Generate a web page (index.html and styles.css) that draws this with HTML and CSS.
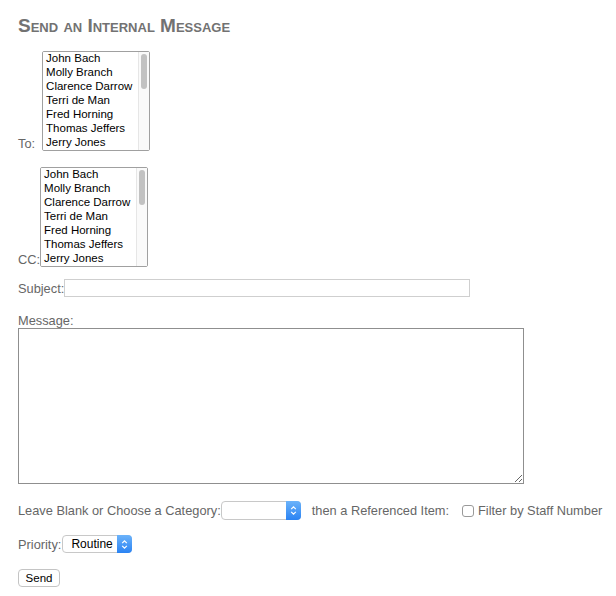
FILE: index.html
```html
<!DOCTYPE html>
<html>

<head>
    <title>Send an Internal Message</title>

    <link rel="stylesheet" href="styles.css">

</head>

<body>
    <main class="page">
        <h2 class="title">Send an Internal Message</h2>

        <form class="msg-form">
            <div class="row list-row">
                <label class="to-label">To:</label>
                <span class="list-wrap">
                    <select class="people" multiple>
                        <option>John Bach</option>
                        <option>Molly Branch</option>
                        <option>Clarence Darrow</option>
                        <option>Terri de Man</option>
                        <option>Fred Horning</option>
                        <option>Thomas Jeffers</option>
                        <option>Jerry Jones</option>
                        <option>Karen Kline</option>
                        <option>Larry Lamb</option>
                        <option>Mary Miller</option>
                        <option>Nancy Noble</option>
                        <option>Oscar Olson</option>
                        <option>Paul Price</option>
                        <option>Rita Ross</option>
                        <option>Sam Stone</option>
                        <option>Tina Tate</option>
                        <option>Victor Vale</option>
                        <option>Wendy West</option>
                        <option>Zack Young</option>
                    </select>
                    <span class="scroll-track"><span class="scroll-thumb"></span></span>
                </span>
            </div>

            <div class="row list-row cc-row">
                <label class="cc-label">CC:</label>
                <span class="list-wrap">
                    <select class="people" multiple>
                        <option>John Bach</option>
                        <option>Molly Branch</option>
                        <option>Clarence Darrow</option>
                        <option>Terri de Man</option>
                        <option>Fred Horning</option>
                        <option>Thomas Jeffers</option>
                        <option>Jerry Jones</option>
                        <option>Karen Kline</option>
                        <option>Larry Lamb</option>
                        <option>Mary Miller</option>
                        <option>Nancy Noble</option>
                        <option>Oscar Olson</option>
                        <option>Paul Price</option>
                        <option>Rita Ross</option>
                        <option>Sam Stone</option>
                        <option>Tina Tate</option>
                        <option>Victor Vale</option>
                        <option>Wendy West</option>
                        <option>Zack Young</option>
                    </select>
                    <span class="scroll-track"><span class="scroll-thumb"></span></span>
                </span>
            </div>

            <div class="row subject-row">
                <label>Subject:</label>
                <input class="subject" type="text">
            </div>

            <div class="message-block">
                <label>Message:</label>
                <textarea class="message"></textarea>
            </div>

            <div class="row category-row">
                <label>Leave Blank or Choose a Category:</label>
                <span class="select-wrap category">
                    <select>
                        <option></option>
                    </select>
                    <span class="arrows">
                        <svg width="7" height="11" viewBox="0 0 7 11">
                            <path d="M1.2 4.2 L3.5 1.8 L5.8 4.2 M1.2 6.8 L3.5 9.2 L5.8 6.8" fill="none" stroke="#fff" stroke-width="1.2"/>
                        </svg>
                    </span>
                </span>
                <span class="ref-label">then a Referenced Item:</span>
                <label class="filter">
                    <input type="checkbox" class="check">
                    Filter by Staff Number
                </label>
            </div>

            <div class="row priority-row">
                <label>Priority:</label>
                <span class="select-wrap priority">
                    <select>
                        <option>Routine</option>
                    </select>
                    <span class="arrows">
                        <svg width="7" height="11" viewBox="0 0 7 11">
                            <path d="M1.2 4.2 L3.5 1.8 L5.8 4.2 M1.2 6.8 L3.5 9.2 L5.8 6.8" fill="none" stroke="#fff" stroke-width="1.2"/>
                        </svg>
                    </span>
                </span>
            </div>

            <div class="buttons">
                <button type="button" class="send">Send</button>
            </div>
        </form>
    </main>
</body>

</html>
```

FILE: styles.css
```css
body {
    margin: 0;
    background: #fff;
    color: #666;

    font-family: "Liberation Sans", Arial, Helvetica, sans-serif;
    font-size: 12.8px;
}

.page {
    padding: 0 18px;
}

.title {
    margin: 14px 0 0;

    font-size: 19px;
    font-weight: bold;
    font-variant: small-caps;
    color: #727272;
    line-height: 23px;
}

.row {
    display: flex;
    align-items: center;
    white-space: nowrap;
}

.row > * {
    flex-shrink: 0;
}

.list-row {
    align-items: flex-end;
    margin-top: 14px;
}

.cc-row {
    margin-top: 16px;
}

.to-label {
    margin-right: 7px;
    line-height: 15px;
}

.cc-label {
    line-height: 15px;
}

.list-wrap {
    position: relative;
    display: block;
}

.people {
    display: block;
    width: 108px;
    height: 100px;
    margin: 0;
    padding: 0 0 0 3px;

    border: 1px solid #a0a0a0;
    background: #fff;

    font-family: "Liberation Sans", Arial, Helvetica, sans-serif;
    font-size: 11.5px;
    color: #000;
    outline: none;
}

.people option {
    padding: 0;
    line-height: 14px;
    height: 14px;
}

.scroll-track {
    position: absolute;
    top: 1px;
    right: 1px;
    bottom: 1px;
    width: 10px;

    background: #fafafa;
    border-left: 1px solid #e6e6e6;
}

.scroll-thumb {
    position: absolute;
    top: 2px;
    left: 2px;
    width: 6px;
    height: 35px;

    background: #c2c2c2;
    border-radius: 3px;
}

.subject-row {
    margin-top: 12px;
}

.subject {
    width: 406px;
    height: 18px;
    margin: 0;
    padding: 0 3px;
    box-sizing: border-box;

    border: 1px solid #cfcfcf;
    outline: none;
}

.message-block {
    margin-top: 16px;
}

.message-block label {
    display: block;
    line-height: 15px;
}

.message {
    display: block;
    width: 506px;
    height: 156px;
    margin: 0;
    box-sizing: border-box;

    border: 1px solid #8f8f8f;
    outline: none;
}

.category-row {
    margin-top: 17px;
}

.select-wrap {
    position: relative;
    display: inline-block;
}

.select-wrap select {
    -webkit-appearance: none;
    appearance: none;
    display: block;
    margin: 0;
    padding: 0 15px 0 8px;
    box-sizing: border-box;

    background: #fff;
    border: 1px solid #c8c8c8;
    border-radius: 4px;

    font-family: "Liberation Sans", Arial, Helvetica, sans-serif;
    font-size: 12px;
    color: #000;
    outline: none;
}

.category select {
    width: 80px;
    height: 19px;
}

.priority {
    margin-left: 1px;
}

.priority select {
    width: 70px;
    height: 18px;
}

.arrows {
    position: absolute;
    top: 0;
    right: 0;
    bottom: 0;
    width: 15px;

    display: flex;
    align-items: center;
    justify-content: center;

    background: linear-gradient(#6cb3fa, #2a83f3);
    border-radius: 0 4px 4px 0;
}

.ref-label {
    margin-left: 11px;
}

.filter {
    display: flex;
    align-items: center;
    margin-left: 13px;
}

.check {
    -webkit-appearance: none;
    appearance: none;
    width: 12px;
    height: 12px;
    margin: 0 4px 0 0;

    border: 1px solid #9a9a9a;
    border-radius: 3px;
    background: #fff;
}

.priority-row {
    margin-top: 15px;
}

.buttons {
    margin-top: 16px;
}

.send {
    width: 42px;
    height: 18px;
    padding: 0;

    background: #fff;
    border: 1px solid #c4c4c4;
    border-radius: 4px;

    font-family: "Liberation Sans", Arial, Helvetica, sans-serif;
    font-size: 11.5px;
    color: #000;
}
```
